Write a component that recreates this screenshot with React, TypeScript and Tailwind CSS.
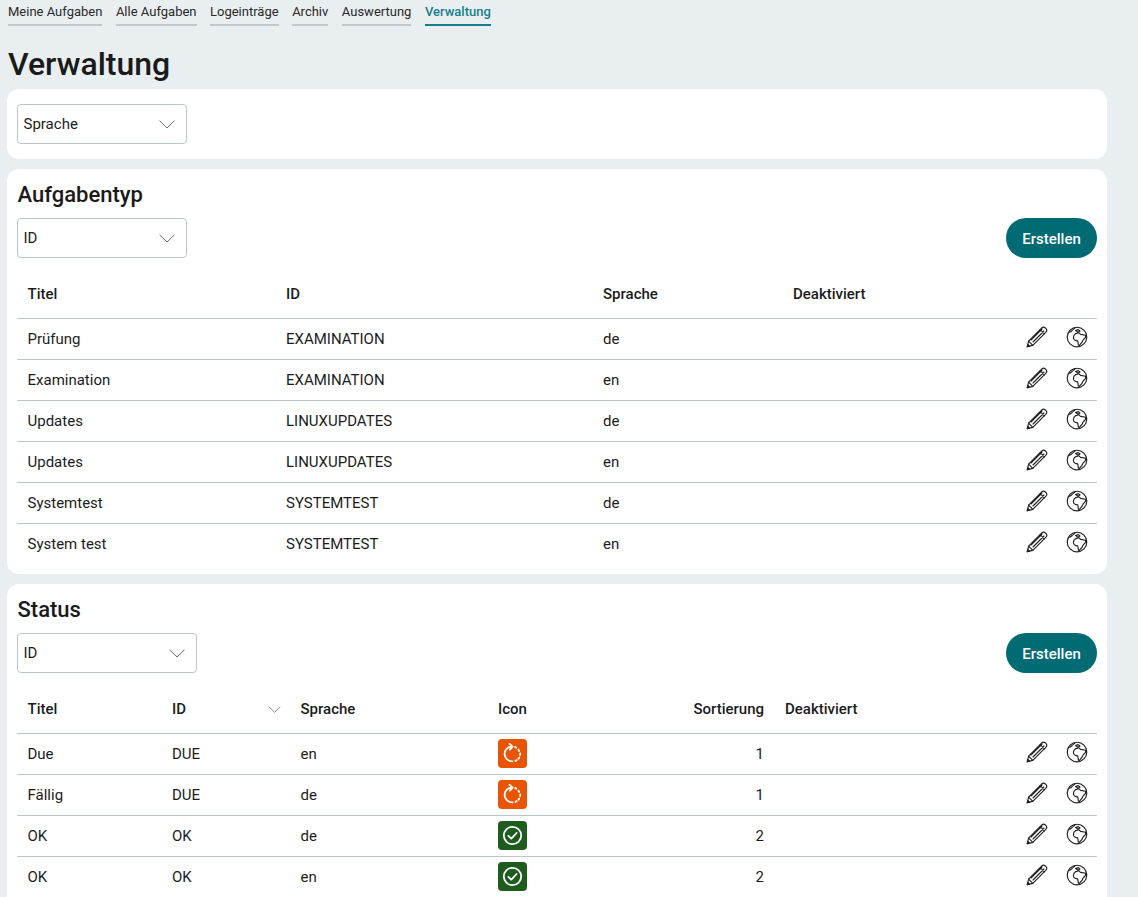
import React from "react";

const Chevron = ({ w = 16, h = 9, color = "#6b6f72" }: { w?: number; h?: number; color?: string }) => (
  <svg width={w} height={h} viewBox="0 0 16 9" fill="none" className="shrink-0">
    <path d="M0.5 0.7 L8 8 L15.5 0.7" stroke={color} strokeWidth="1" />
  </svg>
);

const PencilIcon = () => (
  <svg width="22" height="22" viewBox="0 0 22 22" fill="none" stroke="#1f1f1f" strokeWidth="1.1" strokeLinejoin="round" strokeLinecap="round">
    <path d="M1.2 20.8 L2.6 15.2 L15.8 2 C16.8 1 18.2 1 19.4 2 L20 2.6 C21 3.7 21 5.1 20 6.1 L6.8 19.4 Z" />
    <path d="M2.6 15.2 L6.8 19.4 M14.2 3.6 L18.4 7.8 M5 14 L16 3 M7 16 L18 5" />
    <path d="M1.2 20.8 L1.8 18.4 L3.6 20.2 Z" fill="#1f1f1f" />
  </svg>
);

const GlobeIcon = () => (
  <svg width="22" height="22" viewBox="0 0 22 22" fill="none" stroke="#1f1f1f" strokeWidth="1.15" strokeLinejoin="round" strokeLinecap="round">
    <circle cx="11" cy="11" r="9.8" />
    <path d="M9.2 1.6 C8.6 3 7 3.4 6 4.6 C5 5.8 3.6 6.2 2.4 6.6" />
    <path d="M12 6.2 L9.6 4.6 L12.2 3.6 L14 5 Z" />
    <path d="M9.8 7.6 L13 6.8 L14.6 8.4 L19.6 9.2 C20.4 11 18.6 12.6 17.4 13.6 C16.6 14.6 16.2 16.4 15.2 17.2 L13.4 19.4 L12.4 19.2 C12 17.4 12.2 15.8 11.6 14.8 C9.8 14.8 7.4 13.8 7.4 11.6 C7.4 9.6 8.6 8.4 9.8 7.6 Z" />
  </svg>
);

const Actions = () => (
  <div className="-mt-[5px] flex items-center justify-end gap-[18px] pr-[9px]">
    <PencilIcon />
    <GlobeIcon />
  </div>
);

const DueIcon = () => (
  <span className="-mt-px flex h-[29px] w-[29px] items-center justify-center rounded-[4px] bg-[#e85400]">
    <svg width="21" height="21" viewBox="0 0 21 21" fill="none" stroke="#ffffff" strokeWidth="1.9" strokeLinecap="round">
      <path d="M9.6 3.6 C5.6 3.9 2.6 7 2.6 10.9 C2.6 15 6 18.4 10.4 18.4" />
      <path d="M7.6 0.9 L10.6 3.6 L7.9 6.6" strokeLinejoin="round" />
      <path d="M13.2 4 L14.2 4.6 M16.4 6.6 L17.1 7.9 M18.2 10.5 L18.1 12 M17.2 14.6 L16.4 15.8 M14.7 17.2 L13.4 17.9" />
    </svg>
  </span>
);

const OkIcon = () => (
  <span className="-mt-px flex h-[29px] w-[29px] items-center justify-center rounded-[4px] bg-[#1e5c1e]">
    <svg width="21" height="21" viewBox="0 0 21 21" fill="none" stroke="#ffffff" strokeWidth="1.8" strokeLinecap="round" strokeLinejoin="round">
      <circle cx="10.5" cy="10.5" r="8.7" />
      <path d="M6.4 10.8 L9.3 13.6 L14.6 8" />
    </svg>
  </span>
);

const SelectBox = ({ label, width }: { label: string; width: string }) => (
  <div className={`flex h-10 items-center justify-between rounded-[4px] border border-[#bcc6ca] bg-white pl-[5.5px] pr-[11px] text-[15px] text-[#1c1c1c] ${width}`}>
    <span className="pt-px">{label}</span>
    <Chevron />
  </div>
);

const CreateButton = () => (
  <button className="h-10 w-[91px] rounded-[20px] bg-[#006b73] pt-[2px] text-[15px] font-medium text-white">Erstellen</button>
);

const typeRows = [
  ["Prüfung", "EXAMINATION", "de"],
  ["Examination", "EXAMINATION", "en"],
  ["Updates", "LINUXUPDATES", "de"],
  ["Updates", "LINUXUPDATES", "en"],
  ["Systemtest", "SYSTEMTEST", "de"],
  ["System test", "SYSTEMTEST", "en"],
];

const statusRows: [string, string, string, "due" | "ok", number][] = [
  ["Due", "DUE", "en", "due", 1],
  ["Fällig", "DUE", "de", "due", 1],
  ["OK", "OK", "de", "ok", 2],
  ["OK", "OK", "en", "ok", 2],
];

const typeGrid = "grid grid-cols-[258px_317px_190px_100px_1fr] items-center";
const statusGrid = "grid grid-cols-[144px_129px_197px_110px_177px_100px_1fr] items-center";

const nav = ["Meine Aufgaben", "Alle Aufgaben", "Logeinträge", "Archiv", "Auswertung", "Verwaltung"];

export default function App() {
  return (
    <div className="h-[897px] w-[1138px] overflow-hidden bg-[#e9eef1] font-['Roboto',sans-serif] text-[#1c1c1c]">
      <nav className="flex gap-[13.5px] pl-2 pt-[3px] text-[13px]">
        {nav.map((n) => (
          <a
            key={n}
            className={
              n === "Verwaltung"
                ? "h-[23px] border-b-2 border-[#14808a] font-medium leading-[18px] text-[#14808a]"
                : "h-[23px] border-b-2 border-[#bfc8cb] leading-[18px] text-[#2a2a2a]"
            }
          >
            {n}
          </a>
        ))}
      </nav>

      <h1 className="ml-2 mt-[17px] h-[46px] text-[32px] font-medium leading-[42px] text-[#1a1a1a]">Verwaltung</h1>

      <div className="ml-[7px] flex w-[1100px] flex-col gap-[10px]">
        <section className="h-[70px] rounded-[12px] bg-white px-[10px] pt-[15px]">
          <SelectBox label="Sprache" width="w-[170px]" />
        </section>

        <section className="h-[405px] rounded-[12px] bg-white px-[10px] pt-[12px]">
          <h2 className="h-[37px] pl-[0.5px] text-[22px] font-medium leading-[28px] text-[#1a1a1a]">Aufgabentyp</h2>
          <div className="flex items-center justify-between">
            <SelectBox label="ID" width="w-[170px]" />
            <CreateButton />
          </div>
          <div className={`${typeGrid} mt-4 h-[45px] border-b border-[#bcc6ca] pb-[4px] text-[15px] font-medium`}>
            <span className="pl-[10.5px]">Titel</span>
            <span className="pl-[11px]">ID</span>
            <span className="pl-[11px]">Sprache</span>
            <span className="pl-[11px]">Deaktiviert</span>
            <span />
          </div>
          {typeRows.map((r, i) => (
            <div
              key={i}
              className={`${typeGrid} h-[41px] text-[15px] ${i < typeRows.length - 1 ? "border-b border-[#bcc6ca]" : ""}`}
            >
              <span className="pl-[10.5px]">{r[0]}</span>
              <span className="pl-[11px]">{r[1]}</span>
              <span className="pl-[11px]">{r[2]}</span>
              <span />
              <Actions />
            </div>
          ))}
        </section>

        <section className="h-[400px] rounded-[12px] bg-white px-[10px] pt-[12px]">
          <h2 className="h-[37px] pl-[0.5px] text-[22px] font-medium leading-[28px] text-[#1a1a1a]">Status</h2>
          <div className="flex items-center justify-between">
            <SelectBox label="ID" width="w-[180px]" />
            <CreateButton />
          </div>
          <div className={`${statusGrid} mt-4 h-[45px] border-b border-[#bcc6ca] pb-[4px] text-[15px] font-medium`}>
            <span className="pl-[10.5px]">Titel</span>
            <span className="flex items-center justify-between pl-[11px] pr-[9px]">
              ID
              <Chevron w={13} h={7} color="#6b6f72" />
            </span>
            <span className="pl-[10.5px]">Sprache</span>
            <span className="pl-[11px]">Icon</span>
            <span className="pr-[10px] text-right">Sortierung</span>
            <span className="pl-[11px]">Deaktiviert</span>
            <span />
          </div>
          {statusRows.map((r, i) => (
            <div key={i} className={`${statusGrid} h-[41px] border-b border-[#bcc6ca] text-[15px]`}>
              <span className="pl-[10.5px]">{r[0]}</span>
              <span className="pl-[11px]">{r[1]}</span>
              <span className="pl-[10.5px]">{r[2]}</span>
              <span className="pl-[11px]">{r[3] === "due" ? <DueIcon /> : <OkIcon />}</span>
              <span className="pr-[10px] text-right">{r[4]}</span>
              <span />
              <Actions />
            </div>
          ))}
        </section>
      </div>
    </div>
  );
}
